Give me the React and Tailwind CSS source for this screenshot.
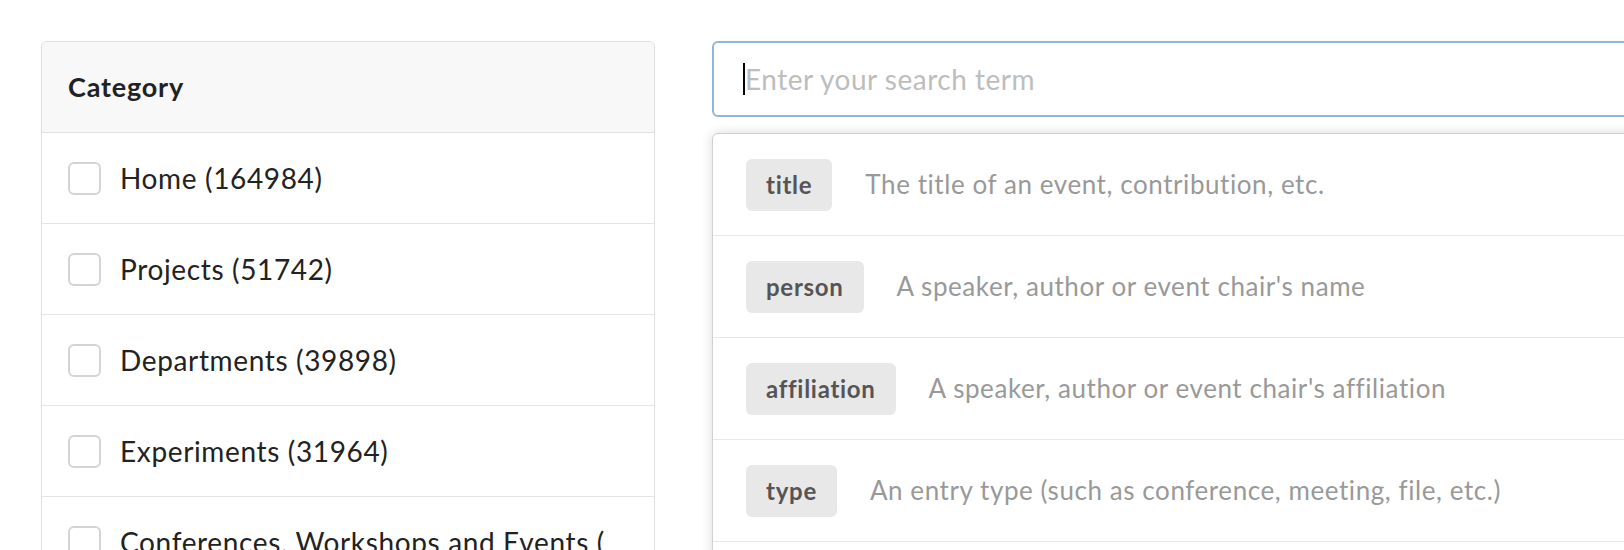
const categories = [
  "Home (164984)",
  "Projects (51742)",
  "Departments (39898)",
  "Experiments (31964)",
  "Conferences, Workshops and Events (",
];

const keywords = [
  { tag: "title", desc: "The title of an event, contribution, etc." },
  { tag: "person", desc: "A speaker, author or event chair's name" },
  { tag: "affiliation", desc: "A speaker, author or event chair's affiliation" },
  { tag: "type", desc: "An entry type (such as conference, meeting, file, etc.)" },
  { tag: "venue", desc: "Name of the venue" },
];

const App = () => {
  return (
    <div className="w-[1624px] h-[550px] overflow-hidden bg-white font-['Lato',sans-serif]">
      <div className="flex items-start gap-[57px] pl-[41px] pt-[41px]">
        <div className="w-[614px] shrink-0 rounded-[6px] border border-[#e0e0e0] bg-white">
          <div className="flex h-[91px] items-center border-b border-[#e0e0e0] bg-[#f8f8f8] px-[26px] rounded-t-[6px]">
            <span className="text-[27px] font-bold tracking-[0.03em] text-[#222]">Category</span>
          </div>
          {categories.map((c) => (
            <div key={c} className="flex h-[91px] items-center gap-[19px] border-b border-[#e4e4e4] px-[26px]">
              <span className="h-[33px] w-[33px] shrink-0 rounded-[6px] border-2 border-[#d4d4d4] bg-white" />
              <span className="whitespace-nowrap text-[28px] tracking-[0.023em] text-[#222]">{c}</span>
            </div>
          ))}
        </div>

        <div className="w-[1100px] shrink-0">
          <div className="flex h-[76px] items-center rounded-[6px] border-2 border-[#93b5d7] pl-[29px]">
            <span className="h-[32px] w-[2px] bg-black" />
            <span className="text-[28px] tracking-[0.018em] text-[#bdbdbd]">Enter your search term</span>
          </div>

          <div className="mt-[16px] rounded-[6px] border border-[#d0d0d0] bg-white shadow-[0_0_12px_rgba(0,0,0,0.15)]">
            {keywords.map((k) => (
              <div key={k.tag} className="flex h-[102px] items-center gap-[33px] border-b border-[#e8e8e8] pl-[33px]">
                <span className="flex h-[52px] items-center rounded-[6px] bg-[#e8e8e8] px-[20px] text-[24px] font-bold tracking-[0.03em] text-[#555]">
                  {k.tag}
                </span>
                <span className="whitespace-nowrap text-[26px] tracking-[0.022em] text-[#999]">{k.desc}</span>
              </div>
            ))}
          </div>
        </div>
      </div>
    </div>
  );
};

export default App;
